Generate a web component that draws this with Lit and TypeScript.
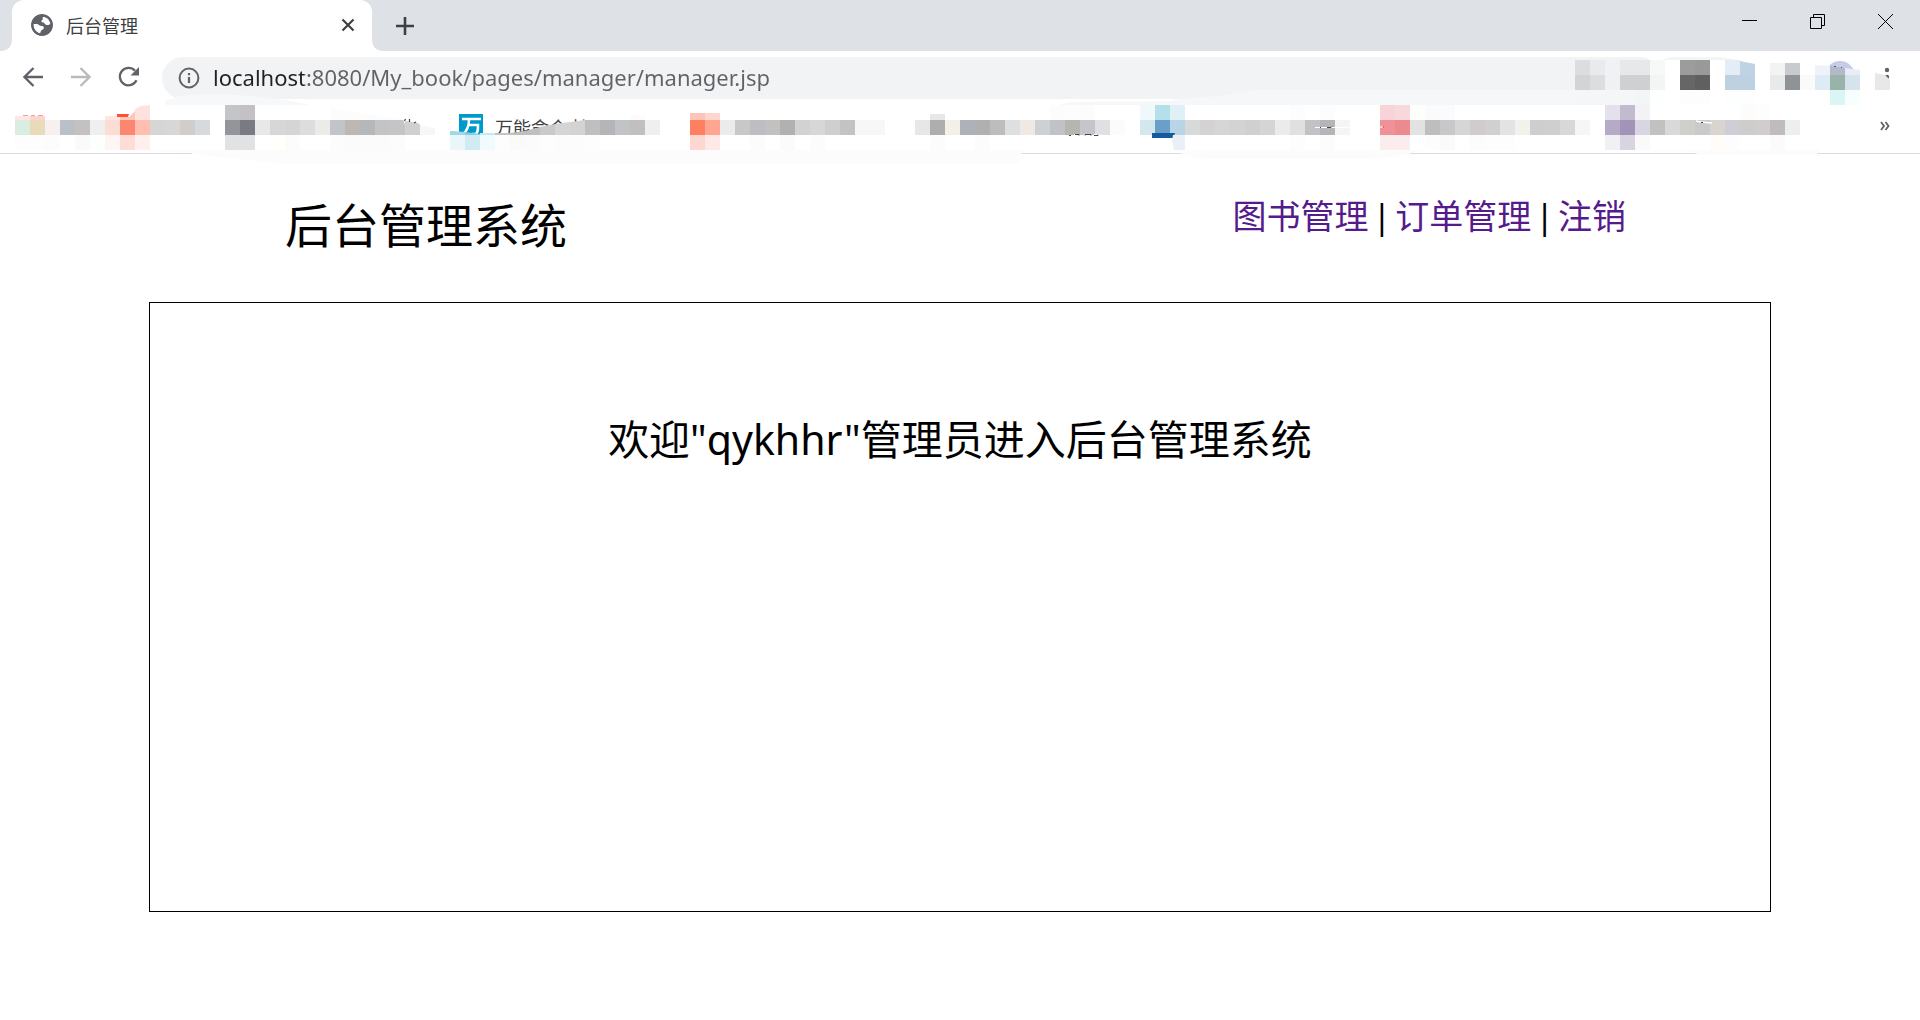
import { LitElement, css, html, svg } from "lit";
import { customElement } from "lit/decorators.js";

const CELL = 15;

interface Bookmark {
  label: string;
  /** Width of the slot, in cells. */
  span: number;
  /** Three rows of cell colours; "-" leaves a cell empty. */
  rows: [string, string, string];
  extra?: unknown;
  under?: unknown;
}

const cells = (rows: string[], offset = 0) =>
  rows.map((row, y) =>
    row
      .split(" ")
      .map((c, x) =>
        c === "-" || c === ""
          ? null
          : svg`<rect x=${x * CELL} y=${y * CELL + offset} width=${CELL} height=${CELL} fill=${"#" + c}></rect>`
      )
  );

const bookmarks: Bookmark[] = [
  {
    label: "书签 1",
    span: 6,
    rows: ["", "d9ede0 e9dbb8 f6f1ee bbbfc8 c4c2c0 efefef", "fdfdfd fdfdfd fcfcfc - fafafa fbfffd"],
    extra: svg`<path d="M0 11h15v4H0z" fill="#ffe6e6"/><path d="M15 11h15v4H15z" fill="#fcd5d3"/>
      <path d="M8 10.500h5M16 10.500h4M23 10.500h5" stroke="#f4a09c"/>`,
  },
  {
    label: "书签 2",
    span: 8,
    rows: ["", "fddcd4 fc8770 febfb2 d8d5d6 d7d7d7 d0cdca d6dadd", "fff6f3 ffdcd5 fff0ed"],
    extra: svg`<path d="M0 11h15v4H0z" fill="#fde6e1"/><path d="M15 12h9l6-6v9H15z" fill="#fdc7bb"/>
      <path d="M12 9h12l-1 3H12z" fill="#ff5130"/><path d="M30 15V4l6-3 9-1v15z" fill="#fee2dd"/>`,
  },
  {
    label: "书签 3",
    span: 15,
    rows: [
      "c4c5c9 c3c1c6",
      "94959a 787b84 e8e8e8 d9d6d7 d5d5d7 dddddd edebe8 c3c4c9 bdb8b4 b6b7b9 c3c4c6 c5c5c7",
      "e1e2e4 e1e2e4 - fffffb fcfcfc - - fcfcfc fbfbfb fbfbfb fbfbfb fcfcfc",
    ],
    extra: svg`<path d="M105 3l75 12h-75z" fill="#fcfcfc"/><path d="M178 14l12 2 5 4v0l-15 0z" fill="#fff"/>
      <path d="M180 16l13 2 2 2v10h-15z" fill="#d0d0d0"/><path d="M195 20l15 3v7h-15z" fill="#f6f8f7"/>
      <path d="M179.500 16l1-2M184.500 14v3M189 18l2-1" stroke="#41434a" stroke-width="1.200"/>`,
  },
  {
    label: "万能命令 扩",
    span: 16,
    rows: ["", "", "e9f7fa d2ebf2 effbfe fdfdfd fafaf9 fbfbfb fdfdfd fcfcfc fcfcfc fdfdfd"],
    extra: svg`<path d="M0 26h2l13 1v3H0z" fill="#a0d8e8"/><path d="M15 27l15 2v1H15z" fill="#86cbe0"/><path d="M30 28h15v2H30z" fill="#c4e9f2"/>
      <path d="M45 28h15v2H45z" fill="#c4c2c4"/><path d="M60 28l15-2v4H60z" fill="#c0bec0"/>
      <path d="M75 26l15-4v8H75z" fill="#bfbfc1"/><path d="M90 22l15-3v11H90z" fill="#cbc8ca"/>
      <path d="M105 19l15-2v13h-15z" fill="#d4d5d7"/><path d="M120 17l15-2v15h-15z" fill="#d5d3d1"/>
      ${["bfbfbf", "b4b5b9", "c2c3c6", "c3bfc1", "efefef"].map(
        (c, i) => svg`<rect x=${135 + i * 15} y="15" width="15" height="15" fill=${"#" + c}></rect>`
      )}<path d="M180 10l15-1v6h-15z" fill="#fcfcfc"/>`,
    under: html`<svg class="favicon" viewBox="0 0 24 24" aria-hidden="true">
        <path d="M0 0h24v24H0z" fill="#0099cc" />
        <path d="M3 5h19M10 5c0 8-2 12-6 15M9 11h10c0 5 0 7-2 9h-4" fill="none" stroke="#fff" stroke-width="2.500" />
      </svg>
      <span>万能命令 扩</span>`,
  },
  {
    label: "书签 5",
    span: 15,
    rows: ["", "ff7f61 ffa591 ebebeb c9c7c8 bdbdc2 c3c1bf b2b1b0 d2d2d3 d5d7d9 cfd0ce c3c3c3 f7f7f7 f7f7f7", "ffd7d2 ffe9e6 - - fcfcfc - fbfbfb - fcfcfc"],
    extra: svg`<path d="M0 8h15v7H0z" fill="#fdc5ba"/><path d="M15 8h15v7H15z" fill="#fed6ce"/>`,
  },
  {
    label: "书签 6",
    span: 15,
    rows: [
      "- - - - - - - - - fcfcfc fdfdfd fcfcfc",
      "e7e7e7 b0aead f5efea acb2b8 b0b0b0 bdbdbd dddfe1 efe9e6 cdd1d4 c1c2c7 b7b5b2 c4c6ca e0e0e2 fbfbfb",
      "- fcfcfc - - fcfcfc",
    ],
    extra: svg`<path d="M15 9h15v6H15z" fill="#e7e7e7"/><path d="M159 29.500h5M169 29.500h7M179 29.500h6" stroke="#fff"/>
      <path d="M154 30.500h2M160 29.500h4v1M170 30.500v-1h6v1M179 30.500h4v-1" fill="none" stroke="#41434a"/>`,
  },
  {
    label: "书签 7",
    span: 16,
    rows: [
      "eff8fb b4dfeb dff1f6 - - - - - - - fdfdfd - fdfdfd",
      "d4e6ee 6a9fc7 b9d4e7 d8dad9 d5d3d2 d6d6d7 d2d3d5 d0d0d1 d5d5d5 ebebeb e0e0df c2c2c4 b4b4b9 f5f5f5",
      "- - - - - - - - - - fdfdfd - fcfcfc",
    ],
    extra: svg`<path d="M12 28h23l-2 5H12z" fill="#155a9d"/><path d="M33 30h12v15H34l-2-9z" fill="#eaf0f6"/>
      <path d="M175 22.500h35" stroke="#fff"/><path d="M180 22.500h1M187 22.500h4l1-1" fill="none" stroke="#41434a"/>`,
  },
  {
    label: "书签 8",
    span: 15,
    rows: [
      "f8d4d9 f7d9dc fefffc fbfbfb fbfbfb",
      "f09097 ec8a90 e2e2e2 bfbdbe c7c8ca d6d6d8 d0ccce d0d0d1 e1e4e2 f2f1ec ccced0 d1cfcd d8d8d8 f6f6f6",
      "fbeced fbeced - fdfdfd fafafa - fcfcfc fdfdfd fdfdfd",
    ],
    extra: svg`<path d="M0 22h3" stroke="#fff"/><path d="M3 22h1" stroke="#d9232e"/>`,
  },
  {
    label: "书签 9",
    span: 13,
    rows: [
      "e4e1ec c2bbd0 f3f3f6 - - - - - - fcfcfc fdfdfd",
      "b6abc6 a393b6 d9d6e3 c3c1c0 d9d9dc d1cfcc c9cbcb dad4d1 cfced6 cecdcb d0cecd bfbbbe edefee",
      "f1f1f5 d9d4e1 fafafb - - - - fffcfa fcfdff - - fbfbfb",
    ],
    extra: svg`<path d="M91 16l5 1 11 1" fill="none" stroke="#fff" stroke-width="1.500"/><path d="M96 17.500h2" stroke="#41434a"/>`,
  },
];

@customElement("browser-bar")
class BrowserBar extends LitElement {
  static styles = css`
    :host {
      display: block;
      position: relative;
      background: #fff;
      border-bottom: 1px solid #dadce0;
      font-family: "Noto Sans", "Noto Sans CJK SC", sans-serif;
      color: #3c4043;
    }
    button {
      display: flex;
      align-items: center;
      justify-content: center;
      padding: 0;
      border: 0;
      background: none;
      color: inherit;
    }
    svg {
      display: block;
      flex: none;
    }
    .tabs {
      display: flex;
      align-items: flex-end;
      height: 51px;
      background: #dee1e6;
    }
    .flare {
      width: 12px;
      height: 51px;
    }
    .tab {
      display: flex;
      align-items: center;
      box-sizing: border-box;
      width: 360px;
      height: 51px;
      padding: 0 12px 2px 18px;
      border-radius: 12px 12px 0 0;
      background: #fff;
      font-size: 18px;
    }
    .tab-title {
      flex: 1;
      margin-left: 12px;
    }
    .tab button {
      width: 24px;
      height: 24px;
    }
    .new-tab {
      width: 42px;
      height: 51px;
    }
    .window {
      display: flex;
      margin-right: 1px;
      margin-left: auto;
    }
    .window button {
      width: 68px;
      height: 42px;
      margin-bottom: 9px;
      color: #000;
    }
    .tools {
      display: flex;
      height: 54px;
      padding-left: 9px;
    }
    .tools > button {
      width: 48px;
      height: 52px;
      color: #5f6368;
    }
    .tools > .off {
      color: #bababa;
    }
    .address {
      display: flex;
      flex: 1;
      align-items: center;
      box-sizing: border-box;
      height: 42px;
      margin: 6px 0 6px 9px;
      padding-left: 16px;
      border-radius: 21px 0 0 21px;
      background: #f1f3f4;
      color: #5f6368;
    }
    .address input {
      flex: 1;
      min-width: 0;
      height: 36px;
      margin-left: 13px;
      padding: 0 0 2px;
      border: 0;
      outline: 0;
      background: linear-gradient(to right, #202124 91px, #5f6368 91px);
      background-clip: text;
      color: transparent;
      font: 22px "Noto Sans", sans-serif;
    }
    .marks {
      display: flex;
      height: 48px;
      padding-left: 15px;
    }
    .mark {
      position: relative;
      display: flex;
      z-index: 1;
      height: 45px;
      color: #3c4043;
      text-decoration: none;
      font-size: 18px;
      line-height: 28px;
    }
    .mark .under {
      display: flex;
      position: absolute;
      inset: 9px 0 0 9px;
      gap: 12px;
      white-space: nowrap;
    }
    .mark .cells {
      position: relative;
    }
    .favicon {
      width: 24px;
      height: 24px;
    }
    .more {
      width: 36px;
      height: 42px;
      margin: 0 17px 0 auto;
      color: #5f6368;
      z-index: 1;
    }
    .haze {
      position: absolute;
      left: 0;
      top: 0;
      width: 100%;
      height: 164px;
      pointer-events: none;
    }
    .extensions {
      position: relative;
      z-index: 1;
    }
  `;

  render() {
    return html`
      <div class="tabs">
        <svg class="flare" viewBox="0 0 12 51" aria-hidden="true"><path d="M0 51Q12 51 12 39V51z" fill="#fff" /></svg>
        <div class="tab">
          <svg width="24" height="24" viewBox="0 0 24 24" aria-hidden="true">
            <circle cx="12" cy="12" r="10.700" fill="#5f6368" />
            <path d="M13 3.500L18 5l2.500 5c-.5 1.700-2 2.300-3.700 2-1.300-.2-2-1-2.600-2-.7-.8-2-.3-2.700-1.200-.8-1.300 1.200-1.500 1.300-2.800.1-.9-.4-1.600.2-2.500z" fill="#fff" />
            <path d="M3.300 11h3.500c1.700 0 2.200 1.500 3.700 1.800 1.500.2 3 .2 3.300 1.700.3 1.700-1.300 2-2.300 2.700-.8.600-.8 2-1.500 3.300-3.500-.7-7-4-6.700-9.500z" fill="#fff" />
            <circle cx="12" cy="12" r="9.700" fill="none" stroke="#5f6368" stroke-width="2.200" />
          </svg>
          <span class="tab-title">后台管理</span>
          <button aria-label="关闭标签页">
            <svg width="14" height="14" viewBox="0 0 14 14"><path d="M1.500 1.500l11 11M12.500 1.500l-11 11" stroke="#3c4043" stroke-width="2.200" /></svg>
          </button>
        </div>
        <svg class="flare" viewBox="0 0 12 51" aria-hidden="true"><path d="M12 51Q0 51 0 39V51z" fill="#fff" /></svg>
        <button class="new-tab" aria-label="新标签页">
          <svg width="18" height="18" viewBox="0 0 18 18"><path d="M9 0v18M0 9h18" stroke="#3c4043" stroke-width="2.600" /></svg>
        </button>
        <div class="window">
          <button aria-label="最小化"><svg width="15" height="15" viewBox="0 0 15 15"><path d="M0 6.500h15" stroke="currentColor" /></svg></button>
          <button aria-label="还原">
            <svg width="15" height="15" viewBox="0 0 15 15"><path d="M.5 3.500h11v11H.5zM3.500 3.500v-3h11v11h-3" fill="none" stroke="currentColor" /></svg>
          </button>
          <button aria-label="关闭"><svg width="15" height="15" viewBox="0 0 15 15"><path d="M0 0l15 15M15 0L0 15" stroke="currentColor" /></svg></button>
        </div>
      </div>

      <div class="tools">
        <button aria-label="后退">
          <svg width="20" height="20" viewBox="0 0 20 20"><path d="M20 10H2M10.500 1L1.500 10l9 9" fill="none" stroke="currentColor" stroke-width="2.300" /></svg>
        </button>
        <button class="off" aria-label="前进">
          <svg width="20" height="20" viewBox="0 0 20 20"><path d="M0 10h18M9.500 1l9 9-9 9" fill="none" stroke="currentColor" stroke-width="2.300" /></svg>
        </button>
        <button aria-label="重新加载">
          <svg width="22" height="22" viewBox="0 0 22 22">
            <path d="M18.500 14.200a8.700 8.700 0 1 1-1.500-9.500" fill="none" stroke="currentColor" stroke-width="2.300" />
            <path d="M21 1v8.500h-8.500z" fill="currentColor" />
          </svg>
        </button>
        <label class="address">
          <svg width="22" height="22" viewBox="0 0 22 22" aria-hidden="true">
            <circle cx="11" cy="11" r="9.400" fill="none" stroke="currentColor" stroke-width="2" />
            <path d="M11 10v6M11 6v2.200" stroke="currentColor" stroke-width="2.200" />
          </svg>
          <input type="text" aria-label="地址" spellcheck="false" value="localhost:8080/My_book/pages/manager/manager.jsp" />
        </label>
        <svg class="extensions" width="345" height="54" viewBox="0 0 345 54" aria-hidden="true">
          <path d="M0 6h68l8 3H0z" fill="#f1f3f4" />
          <path d="M88 9q4-3 10-3h46l20 3z" fill="#f3f4f4" />
          <circle cx="265" cy="25" r="15" fill="#c5cbe8" />
          ${cells(
            [
              "dcdde0 e9eaec f0f1f4 e7e8ea e7e8ea f6f9f8 - 9c9c9c 999999 -",
              "d3d4d6 dcdddf f0f1f4 cfd0d2 cfd0d2 f3f5f4 - 666666 606060 - bdd1e1 bdd1e2 - e8eae9 909396 fafafa dcebf4 9ab3a9 d6e2ec",
              "f5f6f8 f5f6f8 f5f6f8 f5f6f8 f3f6f6 fcfffd - fdfdfd fdfdfd - fdfefe fdfefe - - - - - d9f6f4 f7fffe",
            ],
            9
          )}
          <path d="M150 9h15v15h-15z" fill="#e4edf5" /><path d="M165 10l15 3v11h-15z" fill="#bfd3e3" />
          <path d="M195 12h15v12h-15z" fill="#f2f4f3" /><path d="M210 12h15v12h-15z" fill="#c9cacc" />
          <path d="M240 14l15 1v9h-15z" fill="#f0f2f9" /><path d="M255 15l15 2v7h-15z" fill="#b3b9c8" /><path d="M270 17l15 2v5h-15z" fill="#e8ecf7" />
          <path d="M259 15.500h2M266 16.500h1" stroke="#55596b" />
          <circle cx="312" cy="19" r="2.200" fill="#5f6368" /><circle cx="312" cy="26" r="2.200" fill="#5f6368" />
          <path d="M300 22l10 2 5 5v10h-15z" fill="#e7e9e8" />
        </svg>
      </div>

      <nav class="marks" aria-label="书签栏">
        ${bookmarks.map(
          (b) => html`<a class="mark" href="#" aria-label=${b.label}>
            ${b.under ? html`<span class="under">${b.under}</span>` : null}
            <svg class="cells" width=${b.span * CELL} height="45" aria-hidden="true">${cells(b.rows)}${b.extra}</svg>
          </a>`
        )}
        <button class="more" aria-label="更多书签">
          <svg width="10" height="10" viewBox="0 0 10 10"><path d="M1 1l3 4-3 4M5.500 1l3 4-3 4" fill="none" stroke="currentColor" stroke-width="1.800" /></svg>
        </button>
      </nav>

      <svg class="haze" viewBox="0 0 1920 164" preserveAspectRatio="none" aria-hidden="true">
        <path d="M165 101l15-5q20-3 60-1l45 5 26 5H165z" fill="#f6f8fa" />
        <path d="M1062 104l10-2 100-1q8-3 50-5 12-4 32-6h321v15H1062z" fill="#f6f7f9" />
        <path d="M130 150h892l-3 12-2 2H280l-40-5-48-5v-1z" fill="#fcfcfc" />
        <path d="M1177 150h248l-15 3v1q-20 4-40 5h-163q-24-2-30-9z" fill="#fcfcfc" />
        <path d="M1540 150h280l-4 5h-115l-12-4z" fill="#fcfcfc" />
        <path d="M0 153.500h192M1540 153.500h149" stroke="#dadce0" />
      </svg>
    `;
  }
}

@customElement("app-root")
class AppRoot extends LitElement {
  static styles = css`
    :host {
      display: block;
      min-height: 100vh;
      background: #fff;
      color: #000;
      font-family: "Noto Sans", "Noto Sans CJK SC", sans-serif;
    }
    .head {
      display: flex;
      align-items: flex-start;
      justify-content: space-between;
      margin: 0 149px;
      padding: 35px 145px 41px 136px;
    }
    h1 {
      margin: 0;
      font-size: 47px;
      font-weight: 400;
      line-height: 72px;
    }
    .links {
      display: flex;
      gap: 4px;
      font-size: 34px;
      line-height: 54px;
    }
    .links a {
      color: #551a8b;
      text-decoration: none;
    }
    main {
      box-sizing: border-box;
      min-height: 610px;
      margin: 0 149px;
      padding-top: 104px;
      border: 1px solid #000;
      text-align: center;
      font-size: 41px;
      line-height: 64px;
    }
    p {
      margin: 0;
    }
  `;

  render() {
    return html`
      <browser-bar></browser-bar>
      <header class="head">
        <h1>后台管理系统</h1>
        <nav class="links">
          <a href="#books">图书管理</a><span>|</span><a href="#orders">订单管理</a><span>|</span><a href="#logout">注销</a>
        </nav>
      </header>
      <main><p>欢迎"qykhhr"管理员进入后台管理系统</p></main>
    `;
  }
}
